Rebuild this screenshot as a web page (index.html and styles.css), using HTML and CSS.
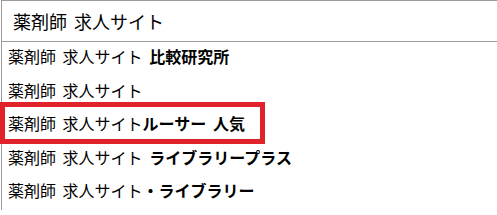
FILE: index.html
```html
<!DOCTYPE html>
<html lang="ja">

<head>
    <meta charset="UTF-8">
    <meta name="viewport" content="width=device-width, initial-scale=1.0">
    <link rel="stylesheet" href="styles.css">
    <title>検索候補</title>
</head>

<body>
    <div class="search">
        <div class="search-box">薬剤師 求人サイト</div>

        <ul class="suggest">
            <li>薬剤師 求人サイト <b>比較研究所</b></li>
            <li>薬剤師 求人サイト</li>
            <li class="marked">薬剤師 求人サイト<b>ルーサー 人気</b></li>
            <li>薬剤師 求人サイト <b>ライブラリープラス</b></li>
            <li>薬剤師 求人サイト<b>・ライブラリー</b></li>
        </ul>
    </div>
</body>

</html>
```

FILE: styles.css
```css
html,
body {
    margin: 0;
    padding: 0;
    background: #fff;
    overflow: hidden;
}

body {
    font-family: "Noto Sans CJK JP", "Noto Sans", sans-serif;
    color: #000;
    word-spacing: 3px;
}

.search {
    margin-left: 1px;
    border-left: 1px solid #9a9a9a;
}

.search-box {
    height: 40px;
    line-height: 40px;
    padding-left: 11px;
    font-size: 18px;
    border-top: 1px solid #9a9a9a;
    border-bottom: 1px solid #9a9a9a;
}

.suggest {
    list-style: none;
    margin: 0;
    padding: 0;
}

.suggest li {
    position: relative;
    height: 33.5px;
    line-height: 28px;
    padding-left: 6px;
    font-size: 16px;
    white-space: nowrap;
}

.suggest b {
    font-weight: 700;
}

/* red annotation frame */
.suggest .marked::after {
    content: "";
    position: absolute;
    top: -7px;
    left: -2px;
    width: 255px;
    height: 32px;
    border: 5px solid #e1222b;
}
```
